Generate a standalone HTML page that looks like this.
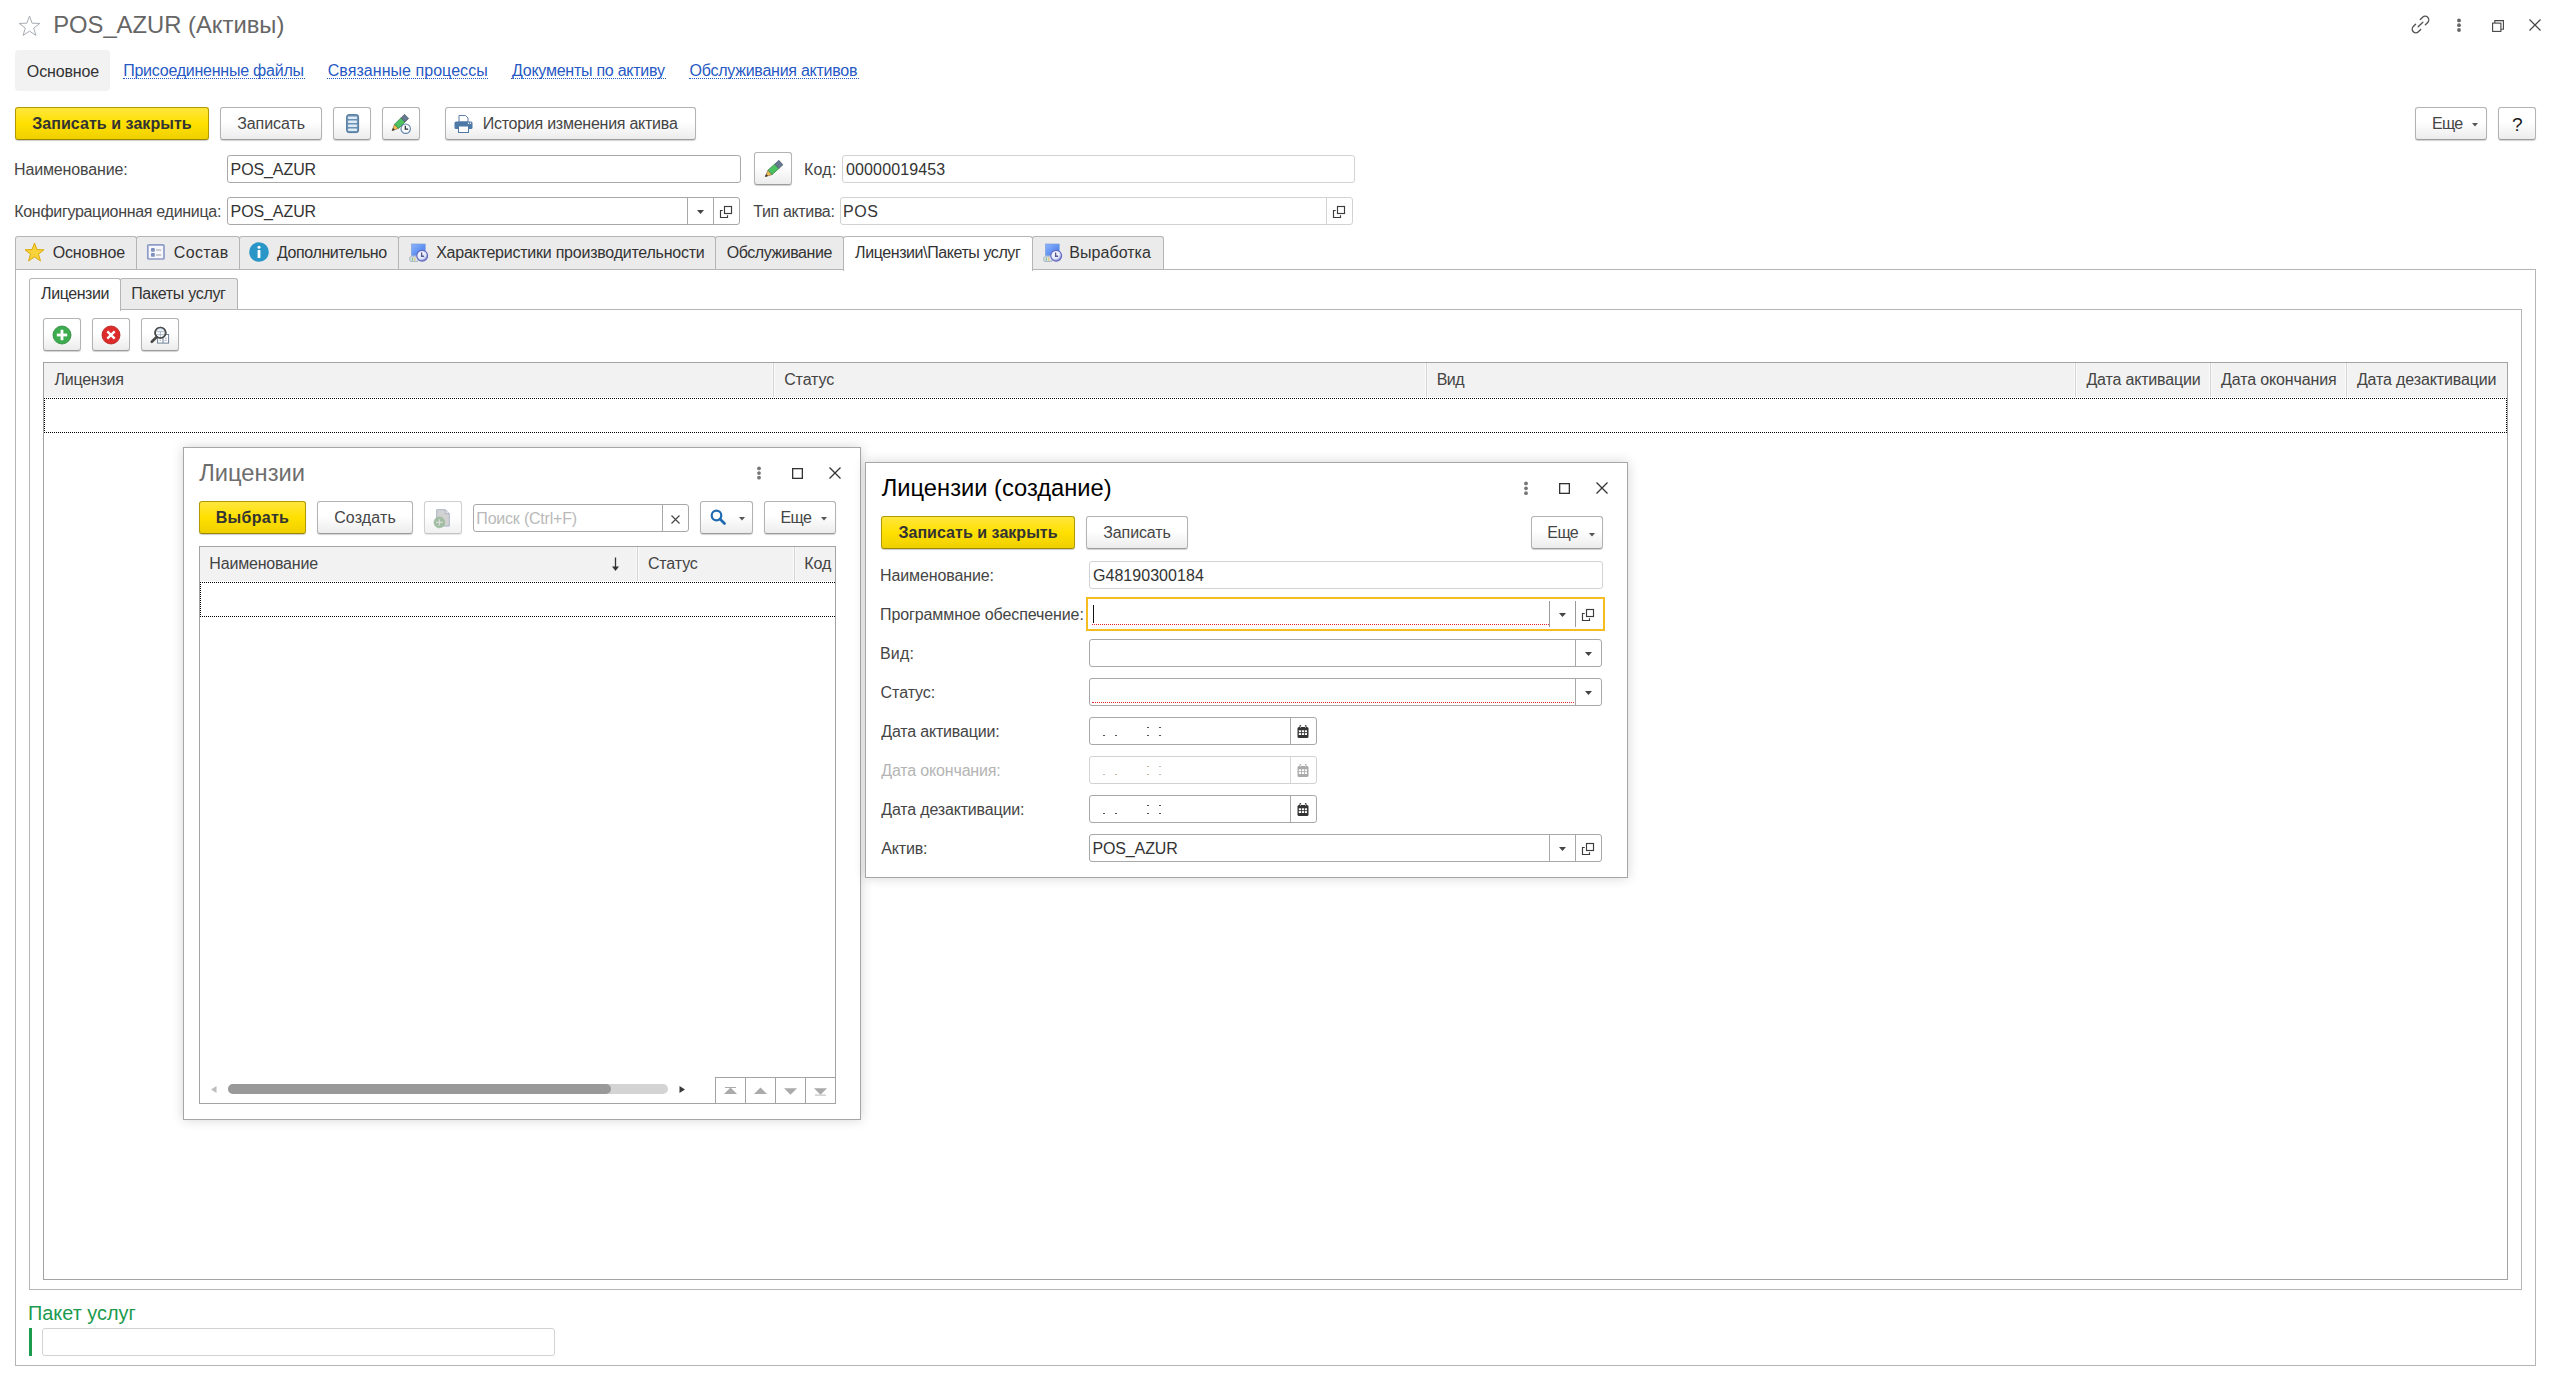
<!DOCTYPE html><html><head><meta charset="utf-8"><style>
html,body{margin:0;padding:0;}
body{width:2554px;height:1374px;position:relative;overflow:hidden;background:#fff;font-family:"Liberation Sans",sans-serif;}
.t{position:absolute;white-space:nowrap;line-height:24px;}
.b{position:absolute;box-sizing:border-box;}
svg.b{overflow:visible;}
.btn{border:1px solid #b3b3b3;border-bottom-color:#9c9c9c;border-radius:3px;background:linear-gradient(#fff 0%,#fff 45%,#ececec 100%);box-shadow:0 1px 1px rgba(0,0,0,0.18);}
.btnd{border:1px solid #cfcfcf;border-bottom-color:#c4c4c4;border-radius:3px;background:linear-gradient(#fff 0%,#fff 45%,#f0f0f0 100%);box-shadow:0 1px 1px rgba(0,0,0,0.10);}
.ybtn{border:1px solid #b09a00;border-bottom-color:#9a8600;border-radius:3px;background:linear-gradient(#ffe63d 0%,#ffe000 50%,#efd000 100%);box-shadow:0 1px 1px rgba(0,0,0,0.2);}
.inp{border:1px solid #a8a8a8;border-radius:3px;background:#fff;}
.inpl{border:1px solid #d2d2d2;border-radius:3px;background:#fff;}
.vl{position:absolute;width:1px;}
.hl{position:absolute;height:1px;}
.tab{border:1px solid #b5b5b5;border-bottom:none;border-radius:3px 3px 0 0;background:#ebebeb;}
.tabs{border:1px solid #b5b5b5;border-bottom:none;border-radius:3px 3px 0 0;background:#fff;}
.pnl{border:1px solid #b5b5b5;}
.tbl{border:1px solid #a3a3a3;background:#fff;}
.thd{background:#f2f2f2;}
.dlg{border:1px solid #a6a6a6;background:#fff;box-shadow:0 0 11px rgba(0,0,0,0.17);}
.link{color:#2759c4;border-bottom:1px dotted #2759c4;line-height:18px !important;}
</style></head><body>

<svg class="b" style="left:18px;top:15px;" width="23" height="21" viewBox="0 0 23 21"><path d="M11.5 1 L14.1 8.2 L21.8 8.4 L15.7 13.1 L17.9 20.4 L11.5 16.1 L5.1 20.4 L7.3 13.1 L1.2 8.4 L8.9 8.2 Z" fill="none" stroke="#a7adb4" stroke-width="1"/></svg>
<div class="t " style="left:53.14px;top:13.00px;font-size:23.804px;color:#666;font-weight:normal;">POS_AZUR (Активы)</div>
<svg class="b" style="left:2410px;top:14px;" width="21" height="21" viewBox="0 0 21 21"><g fill="none" stroke="#555" stroke-width="1.4" stroke-linecap="round"><path d="M8.2 12.8 L12.8 8.2"/><path d="M10.3 5.6 L12.6 3.3 A3.3 3.3 0 0 1 17.7 8.4 L15.4 10.7"/><path d="M10.7 15.4 L8.4 17.7 A3.3 3.3 0 0 1 3.3 12.6 L5.6 10.3"/></g></svg>
<svg class="b" style="left:2456px;top:17.5px;" width="6" height="14.399999999999999" viewBox="0 0 6 14.399999999999999"><circle cx="3" cy="2.40" r="1.9" fill="#666"/><circle cx="3" cy="7.20" r="1.9" fill="#666"/><circle cx="3" cy="12.00" r="1.9" fill="#666"/></svg>
<svg class="b" style="left:2492px;top:20px;" width="12" height="12" viewBox="0 0 12 12"><g fill="none" stroke="#444" stroke-width="1.1"><rect x="0.6" y="3.1" width="8.3" height="8.3"/><path d="M2.8 3.1V0.6H11.4V9.2H8.9"/></g></svg>
<svg class="b" style="left:2529px;top:19px;" width="12" height="12" viewBox="0 0 12 12"><path d="M0.5 0.5L11.5 11.5M11.5 0.5L0.5 11.5" stroke="#444" stroke-width="1.2" fill="none"/></svg>
<div class="b " style="left:15px;top:50px;width:95px;height:41px;background:#f2f2f2;border-radius:4px;"></div>
<div class="t " style="left:26.85px;top:60.00px;font-size:16.000px;letter-spacing:-0.131px;color:#333;font-weight:normal;">Основное</div>
<div class="t " style="left:123.15px;top:59.00px;font-size:16.000px;letter-spacing:-0.235px;color:#2759c4;font-weight:normal;">Присоединенные файлы</div>
<div class="b " style="left:123px;top:78px;width:182px;height:1px;border-top:1px dotted #2759c4;"></div>
<div class="t " style="left:327.75px;top:59.00px;font-size:16.000px;letter-spacing:0.048px;color:#2759c4;font-weight:normal;">Связанные процессы</div>
<div class="b " style="left:327px;top:78px;width:161px;height:1px;border-top:1px dotted #2759c4;"></div>
<div class="t " style="left:512.00px;top:59.00px;font-size:16.000px;letter-spacing:-0.251px;color:#2759c4;font-weight:normal;">Документы по активу</div>
<div class="b " style="left:511px;top:78px;width:155px;height:1px;border-top:1px dotted #2759c4;"></div>
<div class="t " style="left:689.55px;top:59.00px;font-size:16.000px;letter-spacing:-0.253px;color:#2759c4;font-weight:normal;">Обслуживания активов</div>
<div class="b " style="left:689px;top:78px;width:170px;height:1px;border-top:1px dotted #2759c4;"></div>
<div class="b ybtn" style="left:15px;top:107px;width:194px;height:33px;"></div>
<div class="t " style="left:32.15px;top:112.00px;font-size:16.000px;letter-spacing:0.057px;color:#333;font-weight:bold;">Записать и закрыть</div>
<div class="b btn" style="left:220px;top:107px;width:102px;height:33px;"></div>
<div class="t " style="left:237.20px;top:112.00px;font-size:16.000px;letter-spacing:-0.084px;color:#454545;font-weight:normal;">Записать</div>
<div class="b btn" style="left:333px;top:107px;width:38px;height:33px;"></div>
<svg class="b" style="left:346px;top:114px;" width="13" height="19" viewBox="0 0 13 19"><rect x="0.6" y="0.6" width="12" height="18" rx="2.2" fill="#6a90b2" stroke="#55799b" stroke-width="1"/><rect x="1.8" y="2.4" width="9.4" height="2.6" rx="1.2" fill="#dcebf7"/><rect x="1.8" y="6.4" width="9.4" height="2.6" rx="1.2" fill="#dcebf7"/><rect x="1.8" y="10.4" width="9.4" height="2.6" rx="1.2" fill="#dcebf7"/><rect x="1.8" y="14.4" width="9.4" height="2.6" rx="1.2" fill="#dcebf7"/></svg>
<div class="b btn" style="left:382px;top:107px;width:38px;height:33px;"></div>
<svg class="b" style="left:386px;top:112px;" width="26" height="24" viewBox="0 0 26 24"><path d="M6.20 18.60 L12.56 16.40 L8.48 12.28 Z" fill="#f5bb52" stroke="#5a4a2a" stroke-width="0.5" stroke-linejoin="round"/><path d="M8.53 17.80 L6.20 18.60 L7.04 16.28 Z" fill="#3d3528" stroke="#3d3528" stroke-width="0.4" stroke-linejoin="round"/><path d="M12.56 16.40 L19.04 10.01 L14.96 5.89 L8.48 12.28 Z" fill="#4cc263" stroke="#2f7a3a" stroke-width="0.7" stroke-linejoin="round"/><path d="M19.04 10.01 L22.64 6.46 L18.56 2.34 L14.96 5.89 Z" fill="#66798f" stroke="#4a5566" stroke-width="0.7" stroke-linejoin="round"/><circle cx="19.7" cy="16.7" r="4.7" fill="#fff" stroke="#5b80a8" stroke-width="1.1"/><path d="M19.3 13.8V17.1H22.2" fill="none" stroke="#1f2a36" stroke-width="1.2"/></svg>
<div class="b btn" style="left:445px;top:107px;width:251px;height:33px;"></div>
<svg class="b" style="left:454px;top:114px;" width="19" height="19" viewBox="0 0 19 19"><path d="M5 1.5H11.5L14 4V8H5Z" fill="#fff" stroke="#5a7da6" stroke-width="1"/><rect x="0.5" y="7.5" width="18" height="7.5" rx="1.5" fill="#4e78a6"/><rect x="4.5" y="12" width="10" height="6.5" fill="#fff" stroke="#4e78a6" stroke-width="1"/><circle cx="14.5" cy="9.3" r="0.7" fill="#fff"/><circle cx="16.5" cy="9.3" r="0.7" fill="#fff"/></svg>
<div class="t " style="left:482.65px;top:112.00px;font-size:16.000px;letter-spacing:-0.248px;color:#454545;font-weight:normal;">История изменения актива</div>
<div class="b btn" style="left:2415px;top:107px;width:72px;height:33px;"></div>
<div class="t " style="left:2431.95px;top:112.00px;font-size:16.000px;letter-spacing:-0.678px;color:#454545;font-weight:normal;">Еще</div>
<svg class="b" style="left:2472px;top:123px;" width="6" height="3.5" viewBox="0 0 6 3.5"><path d="M0 0H6L3.0 3.5Z" fill="#555"/></svg>
<div class="b btn" style="left:2498px;top:107px;width:38px;height:33px;"></div>
<div class="t " style="left:2512.00px;top:113.00px;font-size:19.200px;color:#1a1a1a;font-weight:normal;">?</div>
<div class="t " style="left:14.05px;top:158.00px;font-size:16.000px;letter-spacing:-0.147px;color:#454545;font-weight:normal;">Наименование:</div>
<div class="b inp" style="left:227px;top:155px;width:514px;height:28px;"></div>
<div class="t " style="left:230.55px;top:158.00px;font-size:16.000px;letter-spacing:-0.091px;color:#333;font-weight:normal;">POS_AZUR</div>
<div class="b btn" style="left:754px;top:152px;width:38px;height:33px;"></div>
<svg class="b" style="left:762px;top:158px;" width="22" height="22" viewBox="0 0 22 22"><path d="M3.30 18.60 L9.98 16.63 L5.98 12.17 Z" fill="#f5bb52" stroke="#5a4a2a" stroke-width="0.5" stroke-linejoin="round"/><path d="M5.75 17.88 L3.30 18.60 L4.28 16.24 Z" fill="#3d3528" stroke="#3d3528" stroke-width="0.4" stroke-linejoin="round"/><path d="M9.98 16.63 L16.85 10.47 L12.84 6.01 L5.98 12.17 Z" fill="#4cc263" stroke="#2f7a3a" stroke-width="0.7" stroke-linejoin="round"/><path d="M16.85 10.47 L20.90 6.83 L16.90 2.37 L12.84 6.01 Z" fill="#66798f" stroke="#4a5566" stroke-width="0.7" stroke-linejoin="round"/></svg>
<div class="t " style="left:803.95px;top:158.00px;font-size:16.000px;letter-spacing:0.282px;color:#454545;font-weight:normal;">Код:</div>
<div class="b inpl" style="left:842px;top:155px;width:513px;height:28px;"></div>
<div class="t " style="left:846.00px;top:158.00px;font-size:16.000px;letter-spacing:0.137px;color:#333;font-weight:normal;">00000019453</div>
<div class="t " style="left:14.25px;top:200.00px;font-size:16.000px;letter-spacing:-0.304px;color:#454545;font-weight:normal;">Конфигурационная единица:</div>
<div class="b inp" style="left:227px;top:197px;width:513px;height:28px;"></div>
<div class="t " style="left:230.55px;top:200.00px;font-size:16.000px;letter-spacing:-0.091px;color:#333;font-weight:normal;">POS_AZUR</div>
<div class="b " style="left:687px;top:198px;width:1px;height:26px;background:#a8a8a8;"></div>
<div class="b " style="left:713px;top:198px;width:1px;height:26px;background:#a8a8a8;"></div>
<svg class="b" style="left:697px;top:210px;" width="7" height="4" viewBox="0 0 7 4"><path d="M0 0H7L3.5 4Z" fill="#444"/></svg>
<svg class="b" style="left:720px;top:206px;" width="13" height="13" viewBox="0 0 13 13"><g fill="none" stroke="#3c3c3c" stroke-width="1.15"><rect x="4.5" y="0.5" width="7" height="7"/><path d="M2.7 4.5H0.5V11.5H7.5V9.3"/></g></svg>
<div class="t " style="left:753.25px;top:200.00px;font-size:16.000px;letter-spacing:-0.353px;color:#454545;font-weight:normal;">Тип актива:</div>
<div class="b inpl" style="left:840px;top:197px;width:513px;height:28px;"></div>
<div class="t " style="left:843.05px;top:200.00px;font-size:16.000px;letter-spacing:0.516px;color:#333;font-weight:normal;">POS</div>
<div class="b " style="left:1326px;top:198px;width:1px;height:26px;background:#d2d2d2;"></div>
<svg class="b" style="left:1333px;top:206px;" width="13" height="13" viewBox="0 0 13 13"><g fill="none" stroke="#3c3c3c" stroke-width="1.15"><rect x="4.5" y="0.5" width="7" height="7"/><path d="M2.7 4.5H0.5V11.5H7.5V9.3"/></g></svg>
<div class="b pnl" style="left:15px;top:269px;width:2521px;height:1097px;"></div>
<div class="b tab" style="left:15px;top:236px;width:122px;height:33px;"></div>
<div class="t " style="left:52.65px;top:241.00px;font-size:16.000px;letter-spacing:-0.116px;color:#333;font-weight:normal;">Основное</div>
<div class="b tab" style="left:136px;top:236px;width:104px;height:33px;"></div>
<div class="t " style="left:173.85px;top:241.00px;font-size:16.000px;letter-spacing:0.290px;color:#333;font-weight:normal;">Состав</div>
<div class="b tab" style="left:239px;top:236px;width:160px;height:33px;"></div>
<div class="t " style="left:277.00px;top:241.00px;font-size:16.000px;letter-spacing:-0.417px;color:#333;font-weight:normal;">Дополнительно</div>
<div class="b tab" style="left:398px;top:236px;width:318px;height:33px;"></div>
<div class="t " style="left:436.15px;top:241.00px;font-size:16.000px;letter-spacing:-0.236px;color:#333;font-weight:normal;">Характеристики производительности</div>
<div class="b tab" style="left:715px;top:236px;width:129px;height:33px;"></div>
<div class="t " style="left:726.65px;top:241.00px;font-size:16.000px;letter-spacing:-0.434px;color:#333;font-weight:normal;">Обслуживание</div>
<div class="b tab" style="left:1032px;top:236px;width:132px;height:33px;"></div>
<div class="t " style="left:1069.25px;top:241.00px;font-size:16.000px;letter-spacing:0.049px;color:#333;font-weight:normal;">Выработка</div>
<div class="b tabs" style="left:843px;top:236px;width:190px;height:35px;"></div>
<div class="t " style="left:855.10px;top:241.00px;font-size:16.000px;letter-spacing:-0.419px;color:#333;font-weight:normal;">Лицензии\Пакеты услуг</div>
<svg class="b" style="left:24px;top:242px;" width="21" height="20" viewBox="0 0 21 20"><path d="M10.5 1 L13 7.6 L20 7.8 L14.5 12.2 L16.5 19 L10.5 15 L4.5 19 L6.5 12.2 L1 7.8 L8 7.6 Z" fill="#f7d23a" stroke="#d9a300" stroke-width="0.9"/></svg>
<svg class="b" style="left:146px;top:243px;" width="20" height="18" viewBox="0 0 20 18"><rect x="1.8" y="1.8" width="16.2" height="14.2" rx="1" fill="#f6f7fc" stroke="#8d9bc6" stroke-width="1.7"/><rect x="5" y="5" width="3.8" height="3.8" rx="0.8" fill="#7f8fc0"/><rect x="5" y="10" width="3.8" height="3.8" rx="0.8" fill="#7f8fc0"/><rect x="10" y="6.3" width="5.3" height="1.4" fill="#b9b9b9"/><rect x="10" y="11.3" width="5.3" height="1.4" fill="#b9b9b9"/></svg>
<svg class="b" style="left:249px;top:242px;" width="20" height="20" viewBox="0 0 20 20"><circle cx="10" cy="10" r="9.8" fill="#2a96c8"/><circle cx="10" cy="5.2" r="1.5" fill="#fff"/><rect x="8.6" y="8" width="2.8" height="8" rx="0.5" fill="#fff"/></svg>
<svg class="b" style="left:409px;top:243px;" width="20" height="20" viewBox="0 0 20 20"><defs><linearGradient id="pg" x1="0" y1="0" x2="1" y2="1"><stop offset="0" stop-color="#8fb4ff"/><stop offset="1" stop-color="#3f78e6"/></linearGradient><radialGradient id="cg" cx="0.4" cy="0.35" r="0.7"><stop offset="0" stop-color="#ffffff"/><stop offset="0.6" stop-color="#dfe6fa"/><stop offset="1" stop-color="#5a5fb8"/></radialGradient></defs><rect x="2.6" y="1" width="13.6" height="11.4" fill="url(#pg)" stroke="#6f95d8" stroke-width="0.6"/><rect x="0.8" y="13.8" width="8.4" height="4.6" rx="1" fill="#dfe5ee" stroke="#97a6b8" stroke-width="0.8"/><rect x="2.8" y="15" width="1.2" height="2.6" fill="#7cc37c"/><rect x="5.2" y="15" width="1.2" height="2.6" fill="#e6c55a"/><circle cx="13.2" cy="12.8" r="5.4" fill="url(#cg)" stroke="#6468c0" stroke-width="1.1"/><path d="M12.6 9.6V13.3H15.1" fill="none" stroke="#55578f" stroke-width="1.4"/></svg>
<svg class="b" style="left:1043px;top:243px;" width="20" height="20" viewBox="0 0 20 20"><defs><linearGradient id="pg" x1="0" y1="0" x2="1" y2="1"><stop offset="0" stop-color="#8fb4ff"/><stop offset="1" stop-color="#3f78e6"/></linearGradient><radialGradient id="cg" cx="0.4" cy="0.35" r="0.7"><stop offset="0" stop-color="#ffffff"/><stop offset="0.6" stop-color="#dfe6fa"/><stop offset="1" stop-color="#5a5fb8"/></radialGradient></defs><rect x="2.6" y="1" width="13.6" height="11.4" fill="url(#pg)" stroke="#6f95d8" stroke-width="0.6"/><rect x="0.8" y="13.8" width="8.4" height="4.6" rx="1" fill="#dfe5ee" stroke="#97a6b8" stroke-width="0.8"/><rect x="2.8" y="15" width="1.2" height="2.6" fill="#7cc37c"/><rect x="5.2" y="15" width="1.2" height="2.6" fill="#e6c55a"/><circle cx="13.2" cy="12.8" r="5.4" fill="url(#cg)" stroke="#6468c0" stroke-width="1.1"/><path d="M12.6 9.6V13.3H15.1" fill="none" stroke="#55578f" stroke-width="1.4"/></svg>
<div class="b pnl" style="left:29px;top:309px;width:2493px;height:981px;"></div>
<div class="b tab" style="left:120px;top:278px;width:118px;height:31px;"></div>
<div class="t " style="left:131.15px;top:282.00px;font-size:16.000px;letter-spacing:-0.311px;color:#333;font-weight:normal;">Пакеты услуг</div>
<div class="b tabs" style="left:29px;top:278px;width:92px;height:33px;"></div>
<div class="t " style="left:41.10px;top:282.00px;font-size:16.000px;letter-spacing:-0.433px;color:#333;font-weight:normal;">Лицензии</div>
<div class="b btn" style="left:43px;top:318px;width:38px;height:33px;"></div>
<div class="b btn" style="left:92px;top:318px;width:38px;height:33px;"></div>
<div class="b btn" style="left:141px;top:318px;width:38px;height:33px;"></div>
<svg class="b" style="left:52px;top:325px;" width="20" height="20" viewBox="0 0 20 20"><circle cx="10" cy="10" r="9" fill="#3cac4e" stroke="#2a8a3a" stroke-width="0.8"/><rect x="4.8" y="8.6" width="10.4" height="2.8" fill="#fff"/><rect x="8.6" y="4.8" width="2.8" height="10.4" fill="#fff"/></svg>
<svg class="b" style="left:101px;top:325px;" width="20" height="20" viewBox="0 0 20 20"><circle cx="10" cy="10" r="9" fill="#dd2a2a" stroke="#b51c1c" stroke-width="0.8"/><path d="M6.3 6.3L13.7 13.7M13.7 6.3L6.3 13.7" stroke="#fff" stroke-width="2.4"/></svg>
<svg class="b" style="left:150px;top:325px;" width="20" height="20" viewBox="0 0 20 20"><rect x="7.6" y="9.5" width="11" height="8.6" fill="#fff" stroke="#6d8096" stroke-width="1"/><path d="M13 9.5V18" stroke="#6d8096" stroke-width="1"/><path d="M9.5 15.3h1.6M14.5 15.3h2.4M15 13.2h1.8" stroke="#8a8fc0" stroke-width="0.7"/><circle cx="10.4" cy="7.75" r="5.3" fill="#fff" stroke="#4d4d4d" stroke-width="1.6"/><path d="M6.2 5.3A5 5 0 0 1 14.6 5.3V6.6H6.2Z" fill="#e3eefb"/><path d="M6.4 6.8H14.4M6.4 9.7H14.4M10.4 6.8V12" stroke="#9aabbd" stroke-width="0.8"/><circle cx="10.4" cy="7.75" r="5.3" fill="none" stroke="#4d4d4d" stroke-width="1.6"/><path d="M1.8 16.8L6.4 12.3" stroke="#4a4a4a" stroke-width="2.6" stroke-linecap="round"/></svg>
<div class="b tbl" style="left:43px;top:362px;width:2465px;height:918px;"></div>
<div class="b thd" style="left:44px;top:363px;width:2463px;height:34px;"></div>
<div class="b " style="left:773px;top:363px;width:1px;height:34px;background:#d3d3d3;border-left:0;"></div>
<div class="b " style="left:772px;top:363px;width:1px;height:34px;background:#fafafa;"></div>
<div class="b " style="left:774px;top:363px;width:1px;height:34px;background:#fafafa;"></div>
<div class="b " style="left:1426px;top:363px;width:1px;height:34px;background:#d3d3d3;border-left:0;"></div>
<div class="b " style="left:1425px;top:363px;width:1px;height:34px;background:#fafafa;"></div>
<div class="b " style="left:1427px;top:363px;width:1px;height:34px;background:#fafafa;"></div>
<div class="b " style="left:2075px;top:363px;width:1px;height:34px;background:#d3d3d3;border-left:0;"></div>
<div class="b " style="left:2074px;top:363px;width:1px;height:34px;background:#fafafa;"></div>
<div class="b " style="left:2076px;top:363px;width:1px;height:34px;background:#fafafa;"></div>
<div class="b " style="left:2210px;top:363px;width:1px;height:34px;background:#d3d3d3;border-left:0;"></div>
<div class="b " style="left:2209px;top:363px;width:1px;height:34px;background:#fafafa;"></div>
<div class="b " style="left:2211px;top:363px;width:1px;height:34px;background:#fafafa;"></div>
<div class="b " style="left:2346px;top:363px;width:1px;height:34px;background:#d3d3d3;border-left:0;"></div>
<div class="b " style="left:2345px;top:363px;width:1px;height:34px;background:#fafafa;"></div>
<div class="b " style="left:2347px;top:363px;width:1px;height:34px;background:#fafafa;"></div>
<div class="b " style="left:44px;top:398px;width:2463px;height:35px;border:1px dotted #000;"></div>
<div class="t " style="left:54.60px;top:368.00px;font-size:16.000px;letter-spacing:-0.269px;color:#444;font-weight:normal;">Лицензия</div>
<div class="t " style="left:784.15px;top:368.00px;font-size:16.000px;letter-spacing:-0.096px;color:#444;font-weight:normal;">Статус</div>
<div class="t " style="left:1436.75px;top:368.00px;font-size:16.000px;letter-spacing:-0.555px;color:#444;font-weight:normal;">Вид</div>
<div class="t " style="left:2086.40px;top:368.00px;font-size:16.000px;letter-spacing:-0.172px;color:#444;font-weight:normal;">Дата активации</div>
<div class="t " style="left:2221.00px;top:368.00px;font-size:16.000px;letter-spacing:-0.127px;color:#444;font-weight:normal;">Дата окончания</div>
<div class="t " style="left:2356.90px;top:368.00px;font-size:16.000px;letter-spacing:-0.135px;color:#444;font-weight:normal;">Дата дезактивации</div>
<div class="t " style="left:28.05px;top:1301.00px;font-size:19.867px;color:#1c9a4e;font-weight:normal;">Пакет услуг</div>
<div class="b " style="left:29px;top:1328px;width:3px;height:28px;background:#1c9a4e;"></div>
<div class="b inpl" style="left:42px;top:1328px;width:513px;height:28px;"></div>
<div class="b dlg" style="left:183px;top:447px;width:678px;height:673px;"></div>
<div class="t " style="left:199.30px;top:461.00px;font-size:23.695px;color:#6e6e6e;font-weight:normal;">Лицензии</div>
<svg class="b" style="left:756px;top:466.1px;" width="6" height="14.099999999999966" viewBox="0 0 6 14.099999999999966"><circle cx="3" cy="2.40" r="1.9" fill="#777"/><circle cx="3" cy="7.05" r="1.9" fill="#777"/><circle cx="3" cy="11.70" r="1.9" fill="#777"/></svg>
<svg class="b" style="left:792px;top:468px;" width="11" height="11" viewBox="0 0 11 11"><rect x="0.65" y="0.65" width="9.7" height="9.7" stroke="#333" stroke-width="1.3" fill="none"/></svg>
<svg class="b" style="left:829px;top:467px;" width="12" height="12" viewBox="0 0 12 12"><path d="M0.5 0.5L11.5 11.5M11.5 0.5L0.5 11.5" stroke="#333" stroke-width="1.3" fill="none"/></svg>
<div class="b ybtn" style="left:199px;top:501px;width:107px;height:33px;"></div>
<div class="t " style="left:215.70px;top:506.00px;font-size:16.000px;letter-spacing:0.290px;color:#333;font-weight:bold;">Выбрать</div>
<div class="b btn" style="left:317px;top:501px;width:96px;height:33px;"></div>
<div class="t " style="left:334.15px;top:506.00px;font-size:16.000px;letter-spacing:0.139px;color:#454545;font-weight:normal;">Создать</div>
<div class="b btnd" style="left:424px;top:501px;width:38px;height:33px;"></div>
<svg class="b" style="left:433px;top:506px;" width="20" height="24" viewBox="0 0 20 24"><path d="M3.7 3.7H12.3L16.3 7.7V20.1H3.7Z" fill="#d2d2d2" stroke="#a9b4c4" stroke-width="1" stroke-linejoin="round"/><path d="M12.3 3.7V7.7H16.3" fill="#e2e2e2" stroke="#a9b4c4" stroke-width="0.9"/><circle cx="6.4" cy="16.4" r="5.4" fill="#a3bfa3" stroke="#98b498" stroke-width="0.6"/><path d="M3.2 16.4H9.6M6.4 13.2V19.6" stroke="#dcdcdc" stroke-width="1.1"/></svg>
<div class="b inp" style="left:473px;top:504px;width:216px;height:28px;"></div>
<div class="b " style="left:662px;top:505px;width:1px;height:26px;background:#a8a8a8;"></div>
<div class="t " style="left:476.35px;top:507.00px;font-size:16.000px;letter-spacing:-0.205px;color:#b9b9b9;font-weight:normal;">Поиск (Ctrl+F)</div>
<svg class="b" style="left:671px;top:515px;" width="9" height="9" viewBox="0 0 9 9"><path d="M0.5 0.5L8.5 8.5M8.5 0.5L0.5 8.5" stroke="#444" stroke-width="1.1" fill="none"/></svg>
<div class="b btn" style="left:700px;top:501px;width:53px;height:33px;"></div>
<svg class="b" style="left:710px;top:509px;" width="17" height="17" viewBox="0 0 17 17"><circle cx="6.5" cy="6.5" r="4.8" fill="none" stroke="#1f6ab0" stroke-width="2.2"/><path d="M10 10 L14.5 14.5" stroke="#1f6ab0" stroke-width="2.8" stroke-linecap="round"/></svg>
<svg class="b" style="left:738.5px;top:517px;" width="6" height="3.5" viewBox="0 0 6 3.5"><path d="M0 0H6L3.0 3.5Z" fill="#555"/></svg>
<div class="b btn" style="left:764px;top:501px;width:72px;height:33px;"></div>
<div class="t " style="left:780.55px;top:506.00px;font-size:16.000px;letter-spacing:-0.628px;color:#454545;font-weight:normal;">Еще</div>
<svg class="b" style="left:821.3px;top:517px;" width="6" height="3.5" viewBox="0 0 6 3.5"><path d="M0 0H6L3.0 3.5Z" fill="#555"/></svg>
<div class="b tbl" style="left:199px;top:546px;width:637px;height:558px;"></div>
<div class="b thd" style="left:200px;top:547px;width:635px;height:34px;"></div>
<div class="b " style="left:637px;top:547px;width:1px;height:34px;background:#d3d3d3;"></div>
<div class="b " style="left:636px;top:547px;width:1px;height:34px;background:#fafafa;"></div>
<div class="b " style="left:638px;top:547px;width:1px;height:34px;background:#fafafa;"></div>
<div class="b " style="left:794px;top:547px;width:1px;height:34px;background:#d3d3d3;"></div>
<div class="b " style="left:793px;top:547px;width:1px;height:34px;background:#fafafa;"></div>
<div class="b " style="left:795px;top:547px;width:1px;height:34px;background:#fafafa;"></div>
<div class="b " style="left:200px;top:582px;width:635px;height:35px;border:1px dotted #000;border-right:none;"></div>
<div class="t " style="left:209.35px;top:552.00px;font-size:16.000px;letter-spacing:-0.201px;color:#444;font-weight:normal;">Наименование</div>
<svg class="b" style="left:611px;top:557px;" width="9" height="15" viewBox="0 0 9 15"><path d="M4.5 0.5V12" stroke="#333" stroke-width="1.3"/><path d="M1 9.5L4.5 14L8 9.5Z" fill="#333"/></svg>
<div class="t " style="left:647.95px;top:552.00px;font-size:16.000px;letter-spacing:-0.136px;color:#444;font-weight:normal;">Статус</div>
<div class="t " style="left:804.15px;top:552.00px;font-size:16.000px;letter-spacing:-0.034px;color:#444;font-weight:normal;">Код</div>
<svg class="b" style="left:211px;top:1086px;" width="6" height="7" viewBox="0 0 6 7"><path d="M5.5 0L0 3.5L5.5 7Z" fill="#bdbdbd"/></svg>
<div class="b " style="left:228px;top:1084px;width:440px;height:10px;background:#d4d4d4;border-radius:5px;"></div>
<div class="b " style="left:228px;top:1084px;width:383px;height:10px;background:#999;border-radius:5px;"></div>
<svg class="b" style="left:679px;top:1086px;" width="6" height="7" viewBox="0 0 6 7"><path d="M0.5 0L6 3.5L0.5 7Z" fill="#3a3a3a"/></svg>
<div class="b " style="left:715px;top:1077px;width:121px;height:27px;border:1px solid #a3a3a3;border-right:none;"></div>
<div class="b " style="left:745px;top:1077px;width:1px;height:27px;background:#a3a3a3;"></div>
<div class="b " style="left:775px;top:1077px;width:1px;height:27px;background:#a3a3a3;"></div>
<div class="b " style="left:805px;top:1077px;width:1px;height:27px;background:#a3a3a3;"></div>
<svg class="b" style="left:724px;top:1087px;" width="13" height="8" viewBox="0 0 13 8"><rect x="1" y="0" width="11" height="1" fill="#aaa"/><path d="M0 7L6.5 0.5L13 7Z" fill="#aaa"/></svg>
<svg class="b" style="left:754px;top:1087px;" width="13" height="7" viewBox="0 0 13 7"><path d="M0 7L6.5 0.5L13 7Z" fill="#aaa"/></svg>
<svg class="b" style="left:784px;top:1088px;" width="13" height="7" viewBox="0 0 13 7"><path d="M0 0.3H13L6.5 6.8Z" fill="#aaa"/></svg>
<svg class="b" style="left:814px;top:1088px;" width="13" height="8" viewBox="0 0 13 8"><path d="M0 0.3H13L6.5 6.8Z" fill="#aaa"/><rect x="1" y="6.5" width="11" height="1.2" fill="#c4c4c4"/></svg>
<div class="b dlg" style="left:865px;top:462px;width:763px;height:416px;"></div>
<div class="t " style="left:881.80px;top:476.00px;font-size:23.695px;color:#000;font-weight:normal;">Лицензии (создание)</div>
<svg class="b" style="left:1523px;top:480.5px;" width="6" height="14.600000000000023" viewBox="0 0 6 14.600000000000023"><circle cx="3" cy="2.40" r="1.9" fill="#777"/><circle cx="3" cy="7.30" r="1.9" fill="#777"/><circle cx="3" cy="12.20" r="1.9" fill="#777"/></svg>
<svg class="b" style="left:1559px;top:483px;" width="11" height="11" viewBox="0 0 11 11"><rect x="0.65" y="0.65" width="9.7" height="9.7" stroke="#333" stroke-width="1.3" fill="none"/></svg>
<svg class="b" style="left:1596px;top:482px;" width="12" height="12" viewBox="0 0 12 12"><path d="M0.5 0.5L11.5 11.5M11.5 0.5L0.5 11.5" stroke="#333" stroke-width="1.3" fill="none"/></svg>
<div class="b ybtn" style="left:881px;top:516px;width:194px;height:33px;"></div>
<div class="t " style="left:898.45px;top:521.00px;font-size:16.000px;letter-spacing:0.033px;color:#333;font-weight:bold;">Записать и закрыть</div>
<div class="b btn" style="left:1086px;top:516px;width:102px;height:33px;"></div>
<div class="t " style="left:1103.30px;top:521.00px;font-size:16.000px;letter-spacing:-0.127px;color:#454545;font-weight:normal;">Записать</div>
<div class="b btn" style="left:1531px;top:516px;width:72px;height:33px;"></div>
<div class="t " style="left:1547.35px;top:521.00px;font-size:16.000px;letter-spacing:-0.628px;color:#454545;font-weight:normal;">Еще</div>
<svg class="b" style="left:1588.5px;top:532.5px;" width="6" height="3.5" viewBox="0 0 6 3.5"><path d="M0 0H6L3.0 3.5Z" fill="#555"/></svg>
<div class="t " style="left:880.05px;top:564.00px;font-size:16.000px;letter-spacing:-0.122px;color:#454545;font-weight:normal;">Наименование:</div>
<div class="t " style="left:880.05px;top:603.00px;font-size:16.000px;letter-spacing:-0.103px;color:#454545;font-weight:normal;">Программное обеспечение:</div>
<div class="t " style="left:880.05px;top:642.00px;font-size:16.000px;letter-spacing:0.135px;color:#454545;font-weight:normal;">Вид:</div>
<div class="t " style="left:880.55px;top:681.00px;font-size:16.000px;letter-spacing:-0.055px;color:#454545;font-weight:normal;">Статус:</div>
<div class="t " style="left:881.30px;top:720.00px;font-size:16.000px;letter-spacing:-0.184px;color:#454545;font-weight:normal;">Дата активации:</div>
<div class="t " style="left:881.30px;top:759.00px;font-size:16.000px;letter-spacing:-0.169px;color:#b4b4b4;font-weight:normal;">Дата окончания:</div>
<div class="t " style="left:881.30px;top:798.00px;font-size:16.000px;letter-spacing:-0.176px;color:#454545;font-weight:normal;">Дата дезактивации:</div>
<div class="t " style="left:881.30px;top:837.00px;font-size:16.000px;letter-spacing:-0.183px;color:#454545;font-weight:normal;">Актив:</div>
<div class="b inpl" style="left:1089px;top:561px;width:514px;height:28px;"></div>
<div class="t " style="left:1092.95px;top:564.00px;font-size:16.000px;letter-spacing:0.047px;color:#333;font-weight:normal;">G48190300184</div>
<div class="b " style="left:1086px;top:597px;width:519px;height:34px;border:2px solid #f5bd1f;background:#fff;"></div>
<div class="b " style="left:1549px;top:601px;width:1px;height:26px;background:#9a9a9a;"></div>
<div class="b " style="left:1575px;top:601px;width:1px;height:26px;background:#9a9a9a;"></div>
<div class="b " style="left:1092px;top:624px;width:457px;height:1px;border-top:1px dotted #e8262a;"></div>
<div class="b " style="left:1093px;top:605px;width:1px;height:18px;background:#111;"></div>
<svg class="b" style="left:1559px;top:613px;" width="7" height="4" viewBox="0 0 7 4"><path d="M0 0H7L3.5 4Z" fill="#444"/></svg>
<svg class="b" style="left:1582px;top:609px;" width="13" height="13" viewBox="0 0 13 13"><g fill="none" stroke="#3c3c3c" stroke-width="1.15"><rect x="4.5" y="0.5" width="7" height="7"/><path d="M2.7 4.5H0.5V11.5H7.5V9.3"/></g></svg>
<div class="b inp" style="left:1089px;top:639px;width:513px;height:28px;"></div>
<div class="b " style="left:1575px;top:640px;width:1px;height:26px;background:#a8a8a8;"></div>
<svg class="b" style="left:1585px;top:652px;" width="7" height="4" viewBox="0 0 7 4"><path d="M0 0H7L3.5 4Z" fill="#444"/></svg>
<div class="b inp" style="left:1089px;top:678px;width:513px;height:28px;"></div>
<div class="b " style="left:1575px;top:679px;width:1px;height:26px;background:#a8a8a8;"></div>
<svg class="b" style="left:1585px;top:691px;" width="7" height="4" viewBox="0 0 7 4"><path d="M0 0H7L3.5 4Z" fill="#444"/></svg>
<div class="b " style="left:1092px;top:702px;width:482px;height:1px;border-top:1px dotted #e8262a;"></div>
<div class="b inp" style="left:1089px;top:717px;width:228px;height:28px;"></div>
<div class="b " style="left:1290px;top:718px;width:1px;height:26px;background:#a8a8a8;"></div>
<svg class="b" style="left:1297px;top:725px;" width="12" height="14" viewBox="0 0 12 14"><rect x="0.5" y="2" width="11" height="11" rx="1.5" fill="#333"/><rect x="2.5" y="0" width="1.6" height="3.5" rx="0.8" fill="#333"/><rect x="7.9" y="0" width="1.6" height="3.5" rx="0.8" fill="#333"/><rect x="3" y="1.2" width="0.6" height="1.6" fill="#fff"/><rect x="8.4" y="1.2" width="0.6" height="1.6" fill="#fff"/><rect x="1.8" y="5.3" width="2.2" height="1.9" fill="#fff"/><rect x="1.8" y="8.1" width="2.2" height="1.9" fill="#fff"/><rect x="4.8" y="5.3" width="2.2" height="1.9" fill="#fff"/><rect x="4.8" y="8.1" width="2.2" height="1.9" fill="#fff"/><rect x="7.8" y="5.3" width="2.2" height="1.9" fill="#fff"/><rect x="7.8" y="8.1" width="2.2" height="1.9" fill="#fff"/></svg>
<div class="b " style="left:1103px;top:735px;width:1px;height:1px;background:#5d4f43;width:2px;"></div>
<div class="b " style="left:1115px;top:735px;width:1px;height:1px;background:#5d4f43;width:2px;"></div>
<div class="b " style="left:1147px;top:735px;width:1px;height:1px;background:#5d4f43;width:2px;"></div>
<div class="b " style="left:1147px;top:727px;width:1px;height:1px;background:#5d4f43;width:2px;"></div>
<div class="b " style="left:1159px;top:735px;width:1px;height:1px;background:#5d4f43;width:2px;"></div>
<div class="b " style="left:1159px;top:727px;width:1px;height:1px;background:#5d4f43;width:2px;"></div>
<div class="b inpl" style="left:1089px;top:756px;width:228px;height:28px;"></div>
<div class="b " style="left:1290px;top:757px;width:1px;height:26px;background:#d6d6d6;"></div>
<svg class="b" style="left:1297px;top:764px;" width="12" height="14" viewBox="0 0 12 14"><rect x="0.5" y="2" width="11" height="11" rx="1.5" fill="#aaa"/><rect x="2.5" y="0" width="1.6" height="3.5" rx="0.8" fill="#aaa"/><rect x="7.9" y="0" width="1.6" height="3.5" rx="0.8" fill="#aaa"/><rect x="3" y="1.2" width="0.6" height="1.6" fill="#fff"/><rect x="8.4" y="1.2" width="0.6" height="1.6" fill="#fff"/><rect x="1.8" y="5.3" width="2.2" height="1.9" fill="#fff"/><rect x="1.8" y="8.1" width="2.2" height="1.9" fill="#fff"/><rect x="4.8" y="5.3" width="2.2" height="1.9" fill="#fff"/><rect x="4.8" y="8.1" width="2.2" height="1.9" fill="#fff"/><rect x="7.8" y="5.3" width="2.2" height="1.9" fill="#fff"/><rect x="7.8" y="8.1" width="2.2" height="1.9" fill="#fff"/></svg>
<div class="b " style="left:1103px;top:774px;width:1px;height:1px;background:#c9b9a6;width:2px;"></div>
<div class="b " style="left:1115px;top:774px;width:1px;height:1px;background:#c9b9a6;width:2px;"></div>
<div class="b " style="left:1147px;top:774px;width:1px;height:1px;background:#c9b9a6;width:2px;"></div>
<div class="b " style="left:1147px;top:766px;width:1px;height:1px;background:#c9b9a6;width:2px;"></div>
<div class="b " style="left:1159px;top:774px;width:1px;height:1px;background:#c9b9a6;width:2px;"></div>
<div class="b " style="left:1159px;top:766px;width:1px;height:1px;background:#c9b9a6;width:2px;"></div>
<div class="b inp" style="left:1089px;top:795px;width:228px;height:28px;"></div>
<div class="b " style="left:1290px;top:796px;width:1px;height:26px;background:#a8a8a8;"></div>
<svg class="b" style="left:1297px;top:803px;" width="12" height="14" viewBox="0 0 12 14"><rect x="0.5" y="2" width="11" height="11" rx="1.5" fill="#333"/><rect x="2.5" y="0" width="1.6" height="3.5" rx="0.8" fill="#333"/><rect x="7.9" y="0" width="1.6" height="3.5" rx="0.8" fill="#333"/><rect x="3" y="1.2" width="0.6" height="1.6" fill="#fff"/><rect x="8.4" y="1.2" width="0.6" height="1.6" fill="#fff"/><rect x="1.8" y="5.3" width="2.2" height="1.9" fill="#fff"/><rect x="1.8" y="8.1" width="2.2" height="1.9" fill="#fff"/><rect x="4.8" y="5.3" width="2.2" height="1.9" fill="#fff"/><rect x="4.8" y="8.1" width="2.2" height="1.9" fill="#fff"/><rect x="7.8" y="5.3" width="2.2" height="1.9" fill="#fff"/><rect x="7.8" y="8.1" width="2.2" height="1.9" fill="#fff"/></svg>
<div class="b " style="left:1103px;top:813px;width:1px;height:1px;background:#5d4f43;width:2px;"></div>
<div class="b " style="left:1115px;top:813px;width:1px;height:1px;background:#5d4f43;width:2px;"></div>
<div class="b " style="left:1147px;top:813px;width:1px;height:1px;background:#5d4f43;width:2px;"></div>
<div class="b " style="left:1147px;top:805px;width:1px;height:1px;background:#5d4f43;width:2px;"></div>
<div class="b " style="left:1159px;top:813px;width:1px;height:1px;background:#5d4f43;width:2px;"></div>
<div class="b " style="left:1159px;top:805px;width:1px;height:1px;background:#5d4f43;width:2px;"></div>
<div class="b inp" style="left:1089px;top:834px;width:513px;height:28px;"></div>
<div class="t " style="left:1092.45px;top:837.00px;font-size:16.000px;letter-spacing:-0.134px;color:#333;font-weight:normal;">POS_AZUR</div>
<div class="b " style="left:1549px;top:835px;width:1px;height:26px;background:#a8a8a8;"></div>
<div class="b " style="left:1575px;top:835px;width:1px;height:26px;background:#a8a8a8;"></div>
<svg class="b" style="left:1559px;top:847px;" width="7" height="4" viewBox="0 0 7 4"><path d="M0 0H7L3.5 4Z" fill="#444"/></svg>
<svg class="b" style="left:1582px;top:843px;" width="13" height="13" viewBox="0 0 13 13"><g fill="none" stroke="#3c3c3c" stroke-width="1.15"><rect x="4.5" y="0.5" width="7" height="7"/><path d="M2.7 4.5H0.5V11.5H7.5V9.3"/></g></svg>
</body></html>
